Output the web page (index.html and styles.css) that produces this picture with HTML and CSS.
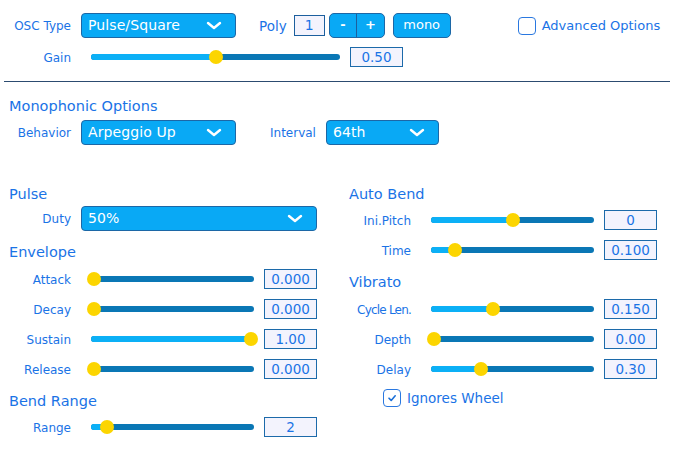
FILE: index.html
```html
<!DOCTYPE html>
<html>
<head>
<meta charset="utf-8">
<link rel="stylesheet" href="styles.css">
</head>
<body>
<div class="page">
  <div class="row1">
    <div class="label">OSC Type</div>
    <div class="dropdown w155">Pulse/Square<svg class="chev" viewBox="0 0 16 9"><path d="M2 2 L8 7 L14 2"/></svg></div>
    <div class="poly-label">Poly</div>
    <div class="polybox">1</div>
    <div class="stepper"><span>-</span><span>+</span></div>
    <div class="btn">mono</div>
    <div class="adv"><span class="check"></span><span class="adv-text">Advanced Options</span></div>
  </div>
  <div class="row gain">
    <div class="label">Gain</div>
    <div class="slider wide" style="--v:0.5"><div class="fill"></div><div class="thumb"></div></div>
    <div class="value">0.50</div>
  </div>
  <div class="rule"></div>

  <div class="title mono-title">Monophonic Options</div>
  <div class="row25 behavior">
    <div class="label">Behavior</div>
    <div class="dropdown w155">Arpeggio Up<svg class="chev" viewBox="0 0 16 9"><path d="M2 2 L8 7 L14 2"/></svg></div>
    <div class="label interval">Interval</div>
    <div class="dropdown w113">64th<svg class="chev" viewBox="0 0 16 9"><path d="M2 2 L8 7 L14 2"/></svg></div>
  </div>

  <div class="cols">
    <div class="col">
      <div class="title">Pulse</div>
      <div class="row25 duty">
        <div class="label">Duty</div>
        <div class="dropdown grow">50%<svg class="chev" viewBox="0 0 16 9"><path d="M2 2 L8 7 L14 2"/></svg></div>
      </div>
      <div class="title envelope">Envelope</div>
      <div class="row first8">
        <div class="label">Attack</div>
        <div class="slider" style="--v:0"><div class="fill"></div><div class="thumb"></div></div>
        <div class="value">0.000</div>
      </div>
      <div class="row next">
        <div class="label">Decay</div>
        <div class="slider" style="--v:0"><div class="fill"></div><div class="thumb"></div></div>
        <div class="value">0.000</div>
      </div>
      <div class="row next">
        <div class="label">Sustain</div>
        <div class="slider" style="--v:1"><div class="fill"></div><div class="thumb"></div></div>
        <div class="value">1.00</div>
      </div>
      <div class="row next">
        <div class="label">Release</div>
        <div class="slider" style="--v:0"><div class="fill"></div><div class="thumb"></div></div>
        <div class="value">0.000</div>
      </div>
      <div class="title after-rows">Bend Range</div>
      <div class="row first7">
        <div class="label">Range</div>
        <div class="slider" style="--v:0.083"><div class="fill"></div><div class="thumb"></div></div>
        <div class="value">2</div>
      </div>
    </div>

    <div class="col">
      <div class="title">Auto Bend</div>
      <div class="row first7">
        <div class="label">Ini.Pitch</div>
        <div class="slider" style="--v:0.5"><div class="fill"></div><div class="thumb"></div></div>
        <div class="value">0</div>
      </div>
      <div class="row next">
        <div class="label">Time</div>
        <div class="slider" style="--v:0.134"><div class="fill"></div><div class="thumb"></div></div>
        <div class="value">0.100</div>
      </div>
      <div class="title after-rows">Vibrato</div>
      <div class="row first8">
        <div class="label narrow">Cycle Len.</div>
        <div class="slider" style="--v:0.376"><div class="fill"></div><div class="thumb"></div></div>
        <div class="value">0.150</div>
      </div>
      <div class="row next">
        <div class="label">Depth</div>
        <div class="slider" style="--v:0"><div class="fill"></div><div class="thumb"></div></div>
        <div class="value">0.00</div>
      </div>
      <div class="row next">
        <div class="label">Delay</div>
        <div class="slider" style="--v:0.3"><div class="fill"></div><div class="thumb"></div></div>
        <div class="value">0.30</div>
      </div>
      <div class="wheel">
        <span class="check checked"><svg viewBox="0 0 12 12"><path d="M3 6.2 L5.2 8.4 L9.2 3.8"/></svg></span>
        <span class="wheel-text">Ignores Wheel</span>
      </div>
    </div>
  </div>
</div>
</body>
</html>
```

FILE: styles.css
```css
html, body {
  margin: 0;
  padding: 0;
  background: #ffffff;
}
body {
  font-family: "DejaVu Sans", "Liberation Sans", sans-serif;
  color: #1a73e6;
  width: 675px;
  height: 458px;
  overflow: hidden;
}
.page {
  padding: 13px 0 0 9px;
}
.label {
  width: 62px;
  flex: none;
  text-align: right;
  font-size: 12px;
  color: #1a73e6;
  white-space: nowrap;
  line-height: 20px;
  padding-top: 1px;
}
.label.narrow {
  letter-spacing: -0.8px;
}
.row1 {
  display: flex;
  align-items: center;
  height: 25px;
}
.row {
  display: flex;
  align-items: center;
  height: 20px;
}
.row25 {
  display: flex;
  align-items: center;
  height: 25px;
}
.dropdown {
  box-sizing: border-box;
  height: 25px;
  margin-left: 10px;
  background: #09a9f5;
  border: 1px solid #1c67a6;
  border-radius: 4px;
  color: #ffffff;
  font-size: 14px;
  line-height: 23px;
  padding-left: 6px;
  display: flex;
  align-items: center;
  justify-content: space-between;
  padding-right: 13px;
  flex: none;
  letter-spacing: 0.1px;
}
.dropdown.w155 { width: 155px; }
.dropdown.w113 { width: 113px; }
.dropdown.grow { width: 236px; }
.chev {
  width: 16px;
  height: 9px;
}
.chev path {
  fill: none;
  stroke: #ffffff;
  stroke-width: 2.4;
  stroke-linecap: round;
  stroke-linejoin: round;
}
.poly-label {
  margin-left: 23px;
  font-size: 13.5px;
}
.polybox {
  box-sizing: border-box;
  margin-left: 7px;
  width: 31px;
  height: 21px;
  background: #f3f3fd;
  border: 1px solid #1c5f9e;
  font-size: 14px;
  text-align: center;
  line-height: 19px;
}
.stepper {
  box-sizing: border-box;
  margin-left: 4px;
  width: 56px;
  height: 25px;
  background: #09a9f5;
  border: 1px solid #1c67a6;
  border-radius: 5px;
  display: flex;
  color: #ffffff;
  font-size: 13px;
  font-weight: bold;
}
.stepper span {
  flex: 1;
  text-align: center;
  line-height: 22px;
}
.stepper span + span {
  border-left: 1px solid #1c5f9e;
}
.btn {
  box-sizing: border-box;
  margin-left: 8px;
  width: 58px;
  height: 25px;
  background: #09a9f5;
  border: 1px solid #1c67a6;
  border-radius: 5px;
  color: #ffffff;
  font-size: 13px;
  text-align: center;
  line-height: 22px;
}
.adv {
  margin-left: 67px;
  display: flex;
  align-items: center;
}
.check {
  box-sizing: border-box;
  width: 18px;
  height: 18px;
  border: 1.5px solid #2a78e0;
  border-radius: 4px;
  background: #ffffff;
  display: flex;
  align-items: center;
  justify-content: center;
}
.check svg {
  width: 12px;
  height: 12px;
}
.check svg path {
  fill: none;
  stroke: #1a6fd8;
  stroke-width: 1.6;
  stroke-linecap: round;
  stroke-linejoin: round;
}
.adv-text {
  margin-left: 6px;
  font-size: 13px;
}
.gain {
  margin-top: 9px;
}
.slider {
  position: relative;
  box-sizing: border-box;
  margin-left: 20px;
  width: 163px;
  height: 6px;
  border-radius: 3px;
  background: #0a77b5;
  flex: none;
}
.slider.wide {
  width: 249px;
}
.fill {
  height: 100%;
  border-radius: 3px;
  background: #0cb0f6;
  width: calc(3px + var(--v) * (100% - 6px));
}
.thumb {
  position: absolute;
  top: 50%;
  left: calc(3px + var(--v) * (100% - 6px));
  width: 14px;
  height: 14px;
  margin: -7px 0 0 -7px;
  border-radius: 50%;
  background: #fcd500;
}
.value {
  box-sizing: border-box;
  margin-left: 10px;
  width: 53px;
  height: 20px;
  background: #f3f3fd;
  border: 1px solid #1c6aaa;
  font-size: 13.5px;
  text-align: center;
  line-height: 19px;
  color: #1a73e6;
  flex: none;
}
.rule {
  margin: 14px 0 0 -5px;
  width: 666px;
  height: 1px;
  background: #2c4b70;
}
.title {
  font-size: 14.5px;
  height: 18px;
  line-height: 19px;
  color: #1a73e6;
}
.mono-title {
  margin-top: 15px;
}
.behavior {
  margin-top: 5px;
}
.label.interval {
  width: auto;
  margin-left: 34px;
}
.cols {
  margin-top: 40px;
  display: flex;
  gap: 32px;
}
.col {
  width: 308px;
  display: flex;
  flex-direction: column;
}
.duty {
  margin-top: 3px;
}
.envelope {
  margin-top: 12px;
}
.first8 { margin-top: 8px; }
.first7 { margin-top: 7px; }
.next { margin-top: 10px; }
.after-rows { margin-top: 13px; }
.wheel {
  margin-top: 10px;
  margin-left: 34px;
  display: flex;
  align-items: center;
}
.wheel-text {
  margin-left: 6px;
  font-size: 13.5px;
}
```
